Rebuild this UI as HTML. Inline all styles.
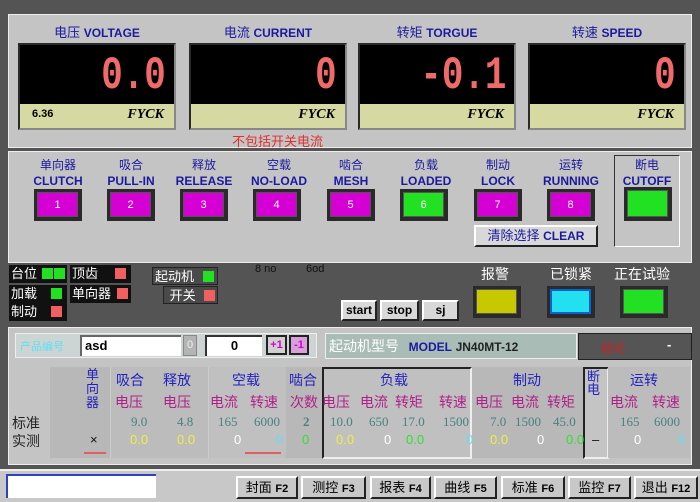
<!DOCTYPE html>
<html><head><meta charset="utf-8"><style>
*{margin:0;padding:0;box-sizing:border-box}
body{width:700px;height:502px;background:#545454;position:relative;overflow:hidden;font-family:"Liberation Sans","Noto Sans CJK SC",sans-serif;font-size:13px}
.a{position:absolute}
.p{position:absolute;background:#c4c4c4}
.lbl{position:absolute;color:#1a1aa0;font-size:13px;text-align:center;white-space:nowrap}
.disp{position:absolute;width:158px;height:87px;border:2px solid #2a2a2a;border-right-color:#888;border-bottom-color:#888}
.disp .blk{position:absolute;left:0;top:0;right:0;height:60px;background:#000}
.disp .ol{position:absolute;left:0;bottom:0;right:0;height:24px;background:#d6d9a2}
.dig{position:absolute;right:8px;top:7px;color:#f06a6a;font-family:"Liberation Mono",monospace;font-weight:bold;font-size:46px;line-height:48px;transform:scaleX(0.78);transform-origin:right}
.fy{position:absolute;right:10px;top:3px;font-family:"Liberation Serif",serif;font-style:italic;font-weight:bold;font-size:14px}
.btn{position:absolute;width:48px;height:32px;background:#2a2a2a;padding:3px 4px 4px 3px}
.btn div{width:100%;height:100%;background:#d400d4;color:#fff;font-size:11px;text-align:center;line-height:25px;border:1px solid #555}
.bl{position:absolute;font-size:12px;text-align:center;color:#1a1aa0;line-height:16px}
.st{position:absolute;background:#111;color:#fff;font-size:13px;line-height:17px;padding-left:2px;height:18px}
.sq{position:absolute;width:11px;height:11px;top:3px}
.g{background:#22e022}.r{background:#f06060}
.gb{position:absolute;background:#d8d8d8;border:2px solid;border-color:#fff #222 #222 #fff;font-size:12px;text-align:center;font-weight:bold;line-height:17px}
.t{position:absolute;font-size:13px;white-space:nowrap}
.bl2{color:#2222c0}.mg{color:#b0208a}.tg{color:#4a8080;font-family:"Liberation Serif",serif}
.fb{position:absolute;top:476px;height:23px;background:#c8c8c8;border:2px solid;border-color:#fff #222 #222 #fff;font-size:13px;text-align:center;line-height:19px}
</style></head><body>
<div class="p" style="left:8px;top:14px;width:684px;height:134px;border:1px solid #eee"></div>
<div class="lbl" style="left:18px;top:22px;width:158px">电压 <b style="font-size:12px">VOLTAGE</b></div>
<div class="lbl" style="left:189px;top:22px;width:158px">电流 <b style="font-size:12px">CURRENT</b></div>
<div class="lbl" style="left:358px;top:22px;width:158px">转矩 <b style="font-size:12px">TORGUE</b></div>
<div class="lbl" style="left:528px;top:22px;width:158px">转速 <b style="font-size:12px">SPEED</b></div>
<div class="disp" style="left:18px;top:43px"><div class="blk"><div class="dig">0.0</div></div><div class="ol"><span class="a" style="left:12px;top:4px;font-size:11px;font-weight:bold">6.36</span><span class="fy">FYCK</span></div></div>
<div class="disp" style="left:189px;top:43px"><div class="blk"><div class="dig">0</div></div><div class="ol"><span class="fy">FYCK</span></div></div>
<div class="disp" style="left:358px;top:43px"><div class="blk"><div class="dig">-0.1</div></div><div class="ol"><span class="fy">FYCK</span></div></div>
<div class="disp" style="left:528px;top:43px"><div class="blk"><div class="dig">0</div></div><div class="ol"><span class="fy">FYCK</span></div></div>
<div class="t" style="left:232px;top:131px;color:#e03030">不包括开关电流</div>
<div class="p" style="left:8px;top:151px;width:684px;height:112px;border:1px solid #eee"></div>
<div class="bl" style="left:28px;top:157px;width:60px">单向器<br><b>CLUTCH</b></div>
<div class="bl" style="left:96px;top:157px;width:70px">吸合<br><b>PULL-IN</b></div>
<div class="bl" style="left:169px;top:157px;width:70px">释放<br><b>RELEASE</b></div>
<div class="bl" style="left:242px;top:157px;width:74px">空载<br><b>NO-LOAD</b></div>
<div class="bl" style="left:316px;top:157px;width:70px">啮合<br><b>MESH</b></div>
<div class="bl" style="left:389px;top:157px;width:74px">负载<br><b>LOADED</b></div>
<div class="bl" style="left:463px;top:157px;width:70px">制动<br><b>LOCK</b></div>
<div class="bl" style="left:536px;top:157px;width:70px">运转<br><b>RUNNING</b></div>
<div class="btn" style="left:34px;top:189px"><div>1</div></div>
<div class="btn" style="left:107px;top:189px"><div>2</div></div>
<div class="btn" style="left:180px;top:189px"><div>3</div></div>
<div class="btn" style="left:253px;top:189px"><div>4</div></div>
<div class="btn" style="left:327px;top:189px"><div>5</div></div>
<div class="btn" style="left:400px;top:189px"><div style="background:#22e022">6</div></div>
<div class="btn" style="left:474px;top:189px"><div>7</div></div>
<div class="btn" style="left:547px;top:189px"><div>8</div></div>
<div class="a" style="left:474px;top:225px;width:124px;height:22px;background:#d8d8d8;border:2px solid;border-color:#fff #222 #222 #fff;color:#1a1aa0;font-size:13px;text-align:center;line-height:18px">清除选择 <b style="font-size:12px">CLEAR</b></div>
<div class="a" style="left:614px;top:155px;width:66px;height:92px;border:1px solid;border-color:#333 #fff #fff #333"></div>
<div class="bl" style="left:614px;top:157px;width:66px">断电<br><b>CUTOFF</b></div>
<div class="btn" style="left:624px;top:187px;height:34px"><div style="background:#22e022"></div></div>
<div class="st" style="left:9px;top:265px;width:58px">台位<span class="sq g" style="left:33px"></span><span class="sq g" style="left:45px"></span></div>
<div class="st" style="left:70px;top:265px;width:61px">顶齿<span class="sq r" style="left:45px"></span></div>
<div class="st" style="left:9px;top:285px;width:58px">加载<span class="sq g" style="left:42px"></span></div>
<div class="st" style="left:70px;top:285px;width:61px">单向器<span class="sq r" style="left:47px"></span></div>
<div class="st" style="left:9px;top:303px;width:58px">制动<span class="sq r" style="left:42px"></span></div>
<div class="st" style="left:152px;top:267px;width:66px;background:#4a4a4a;border:1px solid #222">起动机<span class="sq g" style="left:50px"></span></div>
<div class="st" style="left:163px;top:286px;width:55px;background:#4a4a4a;border:1px solid #222">&nbsp;开关<span class="sq r" style="left:40px"></span></div>
<div class="t" style="left:255px;top:263px;font-size:11px;color:#111">8 no</div>
<div class="t" style="left:306px;top:263px;font-size:11px;color:#111">6od</div>
<div class="gb" style="left:341px;top:300px;width:36px;height:21px">start</div>
<div class="gb" style="left:380px;top:300px;width:39px;height:21px">stop</div>
<div class="gb" style="left:422px;top:300px;width:37px;height:21px">sj</div>
<div class="t" style="left:481px;top:264px;color:#fff;font-size:14px">报警</div>
<div class="t" style="left:550px;top:264px;color:#fff;font-size:14px">已锁紧</div>
<div class="t" style="left:614px;top:264px;color:#fff;font-size:14px">正在试验</div>
<div class="btn" style="left:473px;top:286px;height:32px"><div style="background:#c8c800"></div></div>
<div class="btn" style="left:547px;top:286px;height:32px"><div style="background:#22e0f0;border:2px solid #1060d0"></div></div>
<div class="btn" style="left:620px;top:286px;height:32px"><div style="background:#22e022"></div></div>
<div class="p" style="left:8px;top:327px;width:684px;height:138px;border:1px solid #eee"></div>
<div class="a" style="left:15px;top:333px;width:302px;height:25px;background:#cdd4d4;border:1px solid #eee"></div>
<div class="t" style="left:20px;top:338px;color:#60e0f0;font-size:11px">产品编号</div>
<div class="a" style="left:80px;top:335px;width:101px;height:21px;background:#fff;border-top:2px solid #666;border-left:2px solid #666;font-weight:bold;padding-left:3px;line-height:18px">asd</div>
<div class="a" style="left:183px;top:335px;width:14px;height:21px;background:#b4b4b4;border:1px solid #888;color:#eee;font-size:11px;text-align:center;line-height:19px">0</div>
<div class="a" style="left:205px;top:335px;width:57px;height:21px;background:#fff;border-top:2px solid #333;border-left:2px solid #333;font-weight:bold;text-align:center;line-height:18px">0</div>
<div class="a" style="left:266px;top:335px;width:21px;height:20px;background:#d0d0d0;border:2px solid #222;color:#d400d4;font-size:11px;font-weight:bold;text-align:center;line-height:16px">+1</div>
<div class="a" style="left:289px;top:335px;width:20px;height:20px;background:#d8a0d8;border:2px solid #222;color:#d400d4;font-size:11px;font-weight:bold;text-align:center;line-height:16px">-1</div>
<div class="a" style="left:325px;top:333px;width:252px;height:26px;background:#a9bdb6;border:1px solid #eee;line-height:24px;padding-left:3px"><span style="color:#fff;font-size:14px">起动机型号</span> <b style="color:#1a1aa0;font-size:12px;margin-left:6px">MODEL</b> <b style="font-size:12px;color:#222">JN40MT-12</b></div>
<div class="a" style="left:578px;top:333px;width:114px;height:27px;background:#555;border:1px solid #222"><span class="a" style="left:22px;top:5px;color:#d02020;font-size:12px">结论</span><span class="a" style="left:88px;top:3px;color:#fff;font-weight:bold">-</span></div>
<div class="a" style="left:50px;top:367px;width:640px;height:91px;background:#b8b8b8"></div>
<div class="a" style="left:110px;top:367px;width:98px;height:91px;background:#bcbcbc;border-left:1px solid #ccc"></div>
<div class="a" style="left:208px;top:367px;width:78px;height:91px;background:#c0c0c0;border-left:1px solid #ccc"></div>
<div class="a" style="left:322px;top:367px;width:150px;height:92px;background:#c0c0c0;border:2px solid;border-color:#222 #eee #eee #222"></div>
<div class="a" style="left:583px;top:367px;width:26px;height:92px;background:#c4c4c4;border:2px solid;border-color:#222 #eee #eee #222"></div>
<div class="a" style="left:608px;top:367px;width:82px;height:91px;background:#bcbcbc"></div>
<div class="t" style="left:12px;top:413px;color:#222;font-size:14px">标准</div>
<div class="t" style="left:12px;top:431px;color:#222;font-size:14px">实测</div>
<div class="t bl2" style="left:86px;top:368px;line-height:14px;width:14px;font-size:13px">单<br>向<br>器</div>
<div class="t bl2" style="left:116px;top:370px;font-size:14px">吸合</div>
<div class="t bl2" style="left:163px;top:370px;font-size:14px">释放</div>
<div class="t bl2" style="left:232px;top:370px;font-size:14px">空载</div>
<div class="t bl2" style="left:289px;top:370px;font-size:14px">啮合</div>
<div class="t bl2" style="left:380px;top:370px;font-size:14px">负载</div>
<div class="t bl2" style="left:513px;top:370px;font-size:14px">制动</div>
<div class="t bl2" style="left:587px;top:370px;line-height:13px;font-size:13px">断<br>电</div>
<div class="t bl2" style="left:630px;top:370px;font-size:14px">运转</div>
<div class="t mg" style="left:115px;top:392px;font-size:14px">电压</div>
<div class="t mg" style="left:163px;top:392px;font-size:14px">电压</div>
<div class="t mg" style="left:210px;top:392px;font-size:14px">电流</div>
<div class="t mg" style="left:250px;top:392px;font-size:14px">转速</div>
<div class="t mg" style="left:290px;top:392px;font-size:14px">次数</div>
<div class="t mg" style="left:322px;top:392px;font-size:14px">电压</div>
<div class="t mg" style="left:360px;top:392px;font-size:14px">电流</div>
<div class="t mg" style="left:395px;top:392px;font-size:14px">转矩</div>
<div class="t mg" style="left:439px;top:392px;font-size:14px">转速</div>
<div class="t mg" style="left:475px;top:392px;font-size:14px">电压</div>
<div class="t mg" style="left:511px;top:392px;font-size:14px">电流</div>
<div class="t mg" style="left:547px;top:392px;font-size:14px">转矩</div>
<div class="t mg" style="left:610px;top:392px;font-size:14px">电流</div>
<div class="t mg" style="left:652px;top:392px;font-size:14px">转速</div>
<div class="t tg" style="left:131px;top:414px">9.0</div>
<div class="t tg" style="left:177px;top:414px">4.8</div>
<div class="t tg" style="left:218px;top:414px">165</div>
<div class="t tg" style="left:254px;top:414px">6000</div>
<div class="t tg" style="left:303px;top:414px;font-weight:bold">2</div>
<div class="t tg" style="left:330px;top:414px">10.0</div>
<div class="t tg" style="left:369px;top:414px">650</div>
<div class="t tg" style="left:402px;top:414px">17.0</div>
<div class="t tg" style="left:443px;top:414px">1500</div>
<div class="t tg" style="left:490px;top:414px">7.0</div>
<div class="t tg" style="left:515px;top:414px">1500</div>
<div class="t tg" style="left:553px;top:414px">45.0</div>
<div class="t tg" style="left:620px;top:414px">165</div>
<div class="t tg" style="left:654px;top:414px">6000</div>
<div class="t" style="left:90px;top:432px;color:#111">×</div>
<div class="a" style="left:84px;top:452px;width:22px;height:2px;background:#e06060"></div>
<div class="a" style="left:245px;top:452px;width:36px;height:2px;background:#e06060"></div>
<div class="t" style="left:130px;top:432px;color:#f0f040">0.0</div>
<div class="t" style="left:177px;top:432px;color:#f0f040">0.0</div>
<div class="t" style="left:234px;top:432px;color:#fff">0</div>
<div class="t" style="left:276px;top:432px;color:#60e0f0">0</div>
<div class="t" style="left:302px;top:432px;color:#30e030">0</div>
<div class="t" style="left:336px;top:432px;color:#f0f040">0.0</div>
<div class="t" style="left:384px;top:432px;color:#fff">0</div>
<div class="t" style="left:406px;top:432px;color:#30e030">0.0</div>
<div class="t" style="left:466px;top:432px;color:#60e0f0">0</div>
<div class="t" style="left:490px;top:432px;color:#f0f040">0.0</div>
<div class="t" style="left:537px;top:432px;color:#fff">0</div>
<div class="t" style="left:566px;top:432px;color:#30e030">0.0</div>
<div class="t" style="left:592px;top:432px;color:#111">–</div>
<div class="t" style="left:634px;top:432px;color:#fff">0</div>
<div class="t" style="left:678px;top:432px;color:#60e0f0">0</div>
<div class="a" style="left:0;top:469px;width:700px;height:33px;background:#c8c8c8;border-top:2px solid #eee"></div>
<div class="a" style="left:6px;top:474px;width:150px;height:24px;background:#fff;border-top:2px solid #3040c0;border-left:2px solid #3040c0"></div>
<div class="fb" style="left:236px;width:62px">封面 <b style="font-size:11px">F2</b></div>
<div class="fb" style="left:301px;width:65px">测控 <b style="font-size:11px">F3</b></div>
<div class="fb" style="left:370px;width:61px">报表 <b style="font-size:11px">F4</b></div>
<div class="fb" style="left:434px;width:63px">曲线 <b style="font-size:11px">F5</b></div>
<div class="fb" style="left:501px;width:64px">标准 <b style="font-size:11px">F6</b></div>
<div class="fb" style="left:568px;width:63px">监控 <b style="font-size:11px">F7</b></div>
<div class="fb" style="left:634px;width:64px">退出 <b style="font-size:11px">F12</b></div>
</body></html>
